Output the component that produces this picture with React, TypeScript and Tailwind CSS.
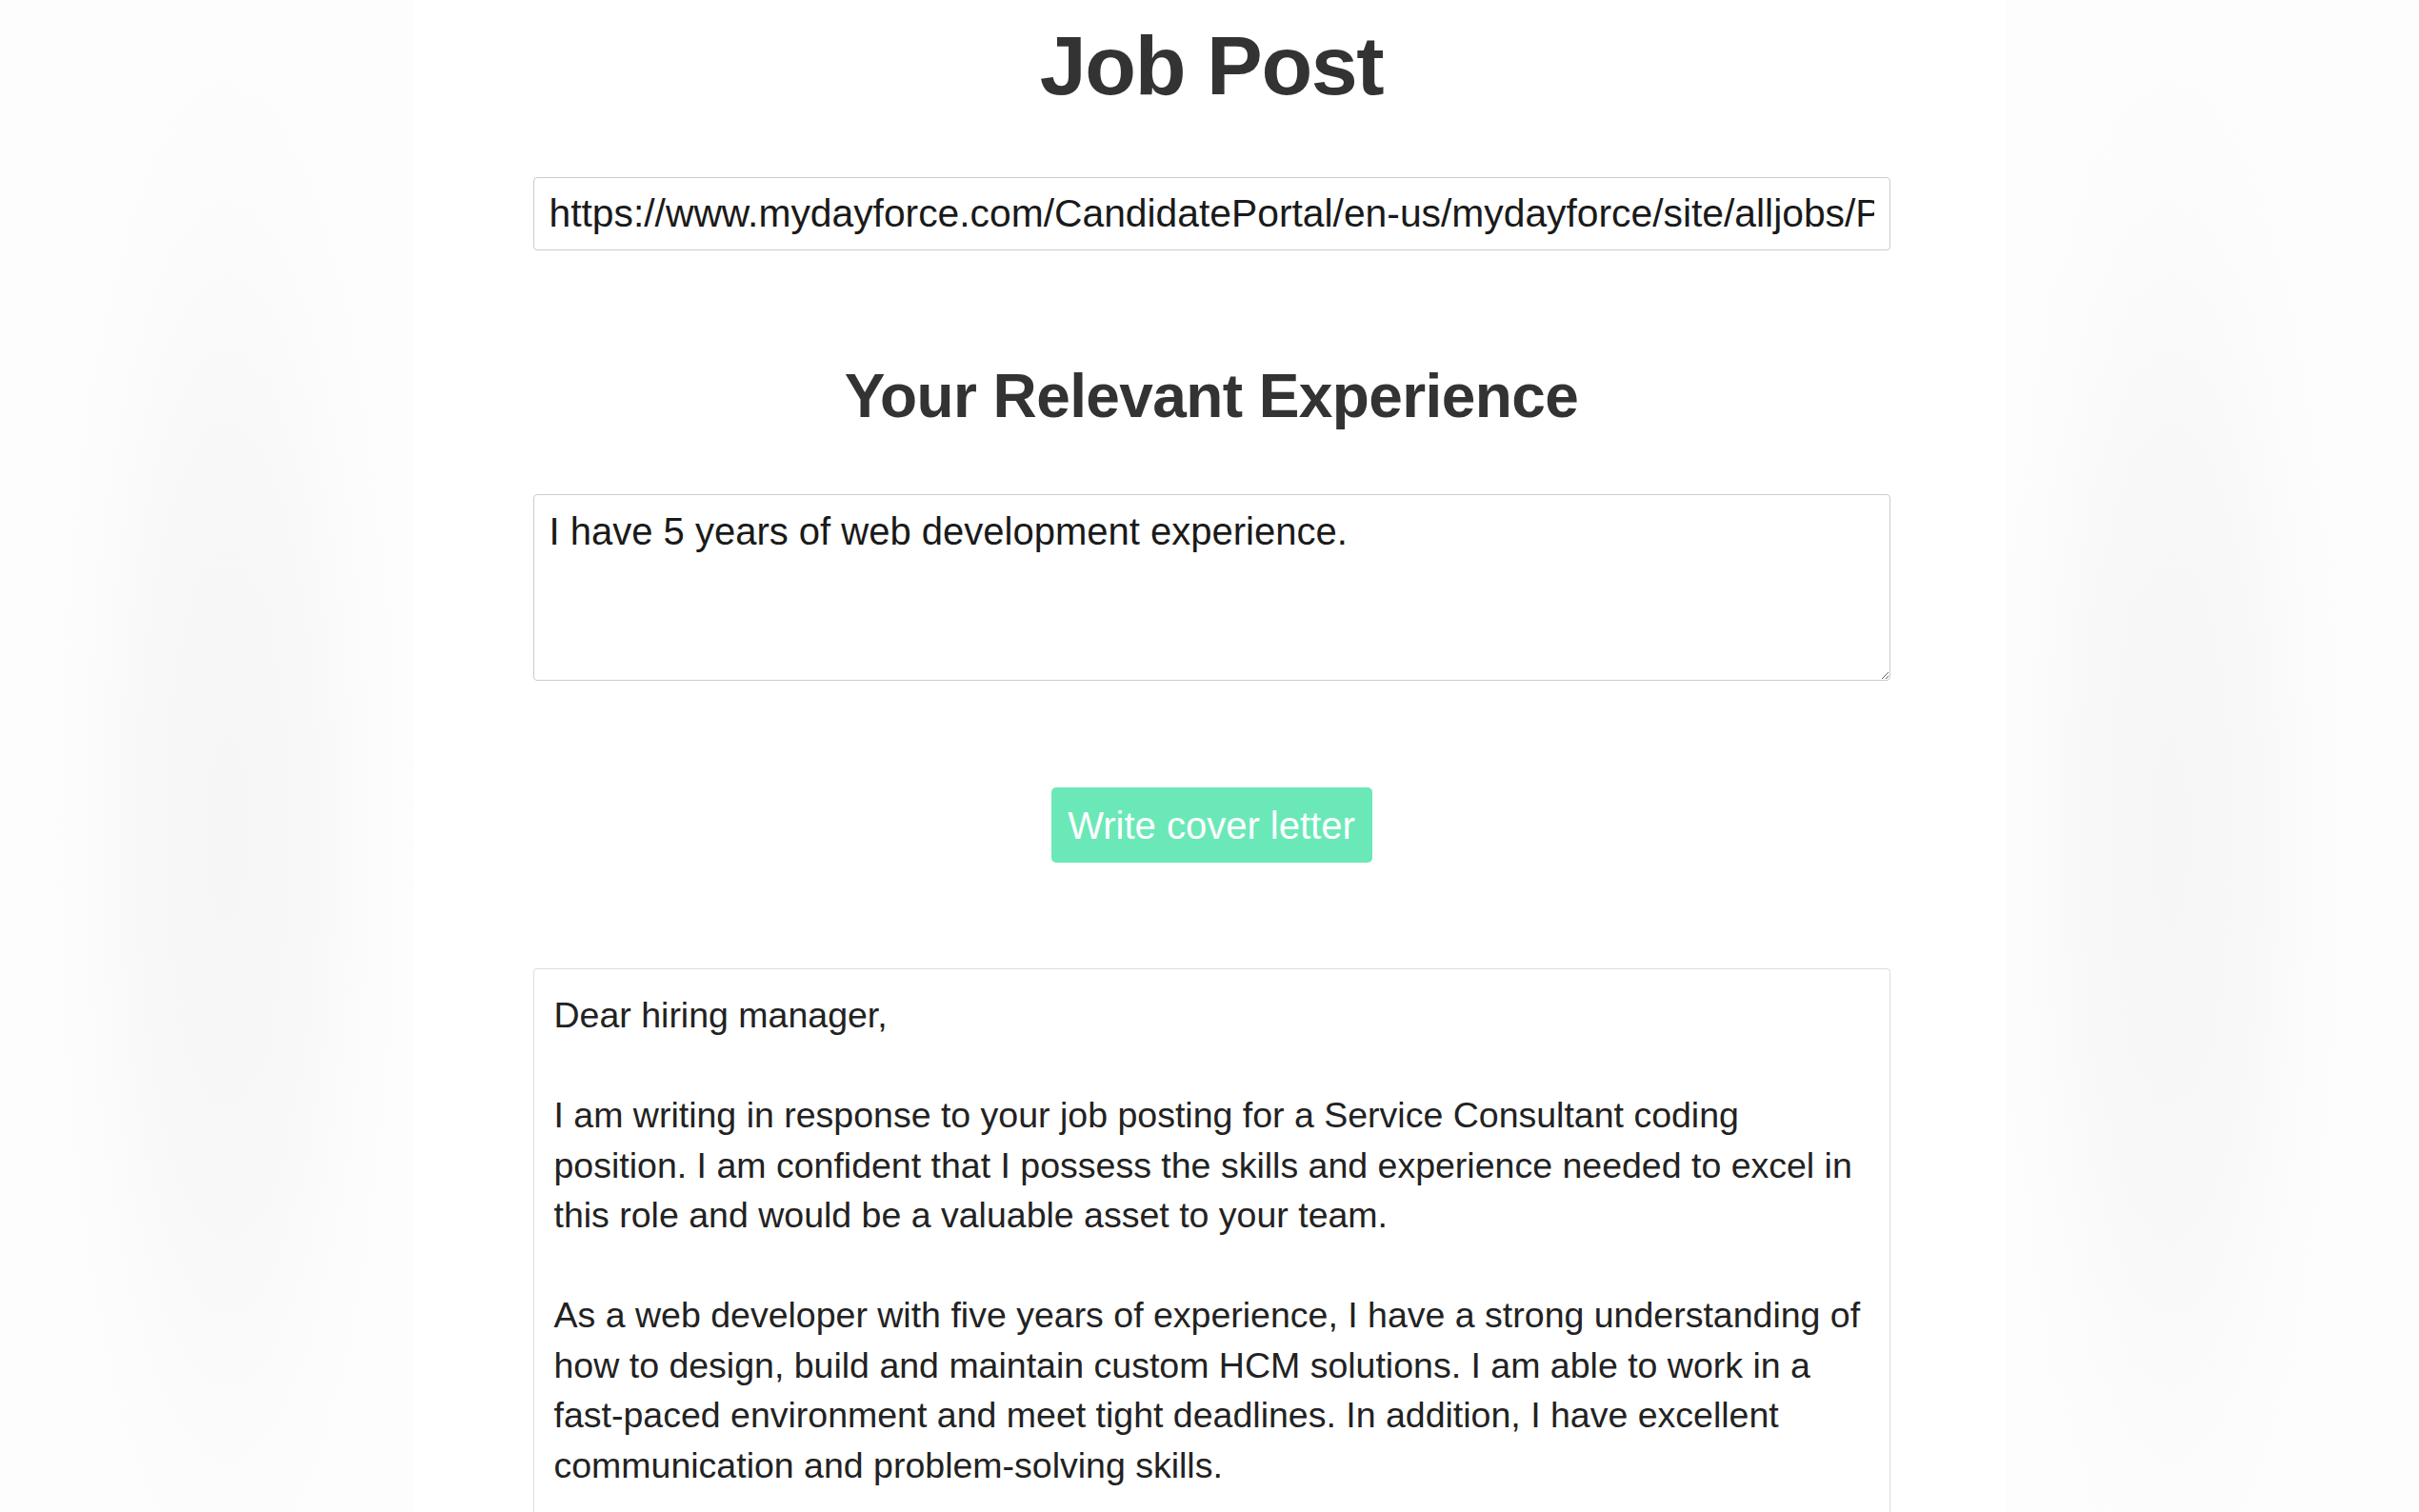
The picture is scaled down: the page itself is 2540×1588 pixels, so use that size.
import React from "react";

const letter = `Dear hiring manager,

I am writing in response to your job posting for a Service Consultant coding position. I am confident that I possess the skills and experience needed to excel in this role and would be a valuable asset to your team.

As a web developer with five years of experience, I have a strong understanding of how to design, build and maintain custom HCM solutions. I am able to work in a fast-paced environment and meet tight deadlines. In addition, I have excellent communication and problem-solving skills.

I am excited about the opportunity to join your team and contribute to your success. Thank you for your time and consideration.

Sincerely,
[Your Name]`;

export default function App() {
  return (
    <div className="flex h-[1588px] w-full overflow-hidden bg-[#fdfdfd] font-['Liberation_Sans',Arial,Helvetica,sans-serif]">
      <div className="flex-1 bg-[radial-gradient(ellipse_45%_55%_at_55%_55%,#f6f6f6_0%,#f8f8f8_45%,#fcfcfc_80%,#fdfdfd_100%)]" />
      <main className="flex w-[1672px] shrink-0 flex-col items-center overflow-hidden bg-white pl-[4px]">
        <h1 className="mt-[25px] shrink-0 text-[88px] font-bold leading-none tracking-[-1.4px] text-[#333333]">
          Job Post
        </h1>
        <input
          type="text"
          readOnly
          defaultValue="https://www.mydayforce.com/CandidatePortal/en-us/mydayforce/site/alljobs/Posting/View/2287"
          className="mt-[73px] block h-[77px] w-[1425px] shrink-0 rounded-[4px] border border-[#cccccc] px-[16px] text-[40.8px] text-[#1a1a1a] outline-none"
        />
        <h2 className="mt-[121px] shrink-0 text-[64px] font-bold leading-none tracking-[-0.6px] text-[#333333]">
          Your Relevant Experience
        </h2>
        <textarea
          readOnly
          defaultValue="I have 5 years of web development experience."
          className="mt-[71px] block h-[196px] w-[1425px] shrink-0 rounded-[4px] border border-[#cccccc] px-[16px] pt-[15px] text-[40px] leading-[46px] text-[#1a1a1a] outline-none"
        />
        <button
          type="button"
          className="mt-[112px] flex h-[79px] w-[337px] shrink-0 items-center justify-center rounded-[5px] bg-[#6be8b8] text-[40px] text-white"
        >
          Write cover letter
        </button>
        <div className="mt-[111px] min-h-[700px] w-[1425px] shrink-0 rounded-t-[4px] border border-b-0 border-[#dddddd] pl-[21px] pr-[17px] pt-[22px]">
          <p className="whitespace-pre-wrap text-[37.5px] leading-[52.5px] text-[#222222]">
            {letter}
          </p>
        </div>
      </main>
      <div className="flex-1 bg-[radial-gradient(ellipse_45%_55%_at_40%_55%,#f6f6f6_0%,#f8f8f8_45%,#fcfcfc_80%,#fdfdfd_100%)]" />
    </div>
  );
}
